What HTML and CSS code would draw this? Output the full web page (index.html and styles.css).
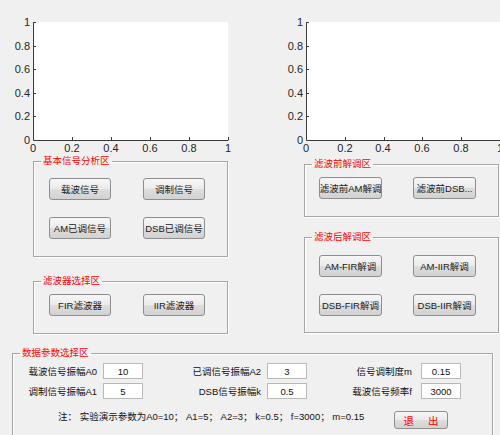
FILE: index.html
```html
<!DOCTYPE html>
<html>
<head>
<meta charset="utf-8">
<link rel="stylesheet" href="styles.css">
</head>
<body>
<div class="plots">
  <svg class="plot" width="250" height="154" viewBox="0 0 250 154">
    <rect x="33" y="22" width="195" height="118" fill="#fff"/>
    <path class="axis" d="M33.5 22V140.5H228.5"/>
    <path class="axis" d="M72.5 140v-3M111.5 140v-3M150.5 140v-3M189.5 140v-3M228.5 140v-3M33 22.5h3M33 46.5h3M33 69.5h3M33 93.5h3M33 116.5h3"/>
    <g class="ylab">
      <text x="30" y="26">1</text>
      <text x="30" y="50">0.8</text>
      <text x="30" y="73">0.6</text>
      <text x="30" y="97">0.4</text>
      <text x="30" y="120">0.2</text>
      <text x="30" y="144">0</text>
    </g>
    <g class="xlab">
      <text x="33" y="152">0</text>
      <text x="72" y="152">0.2</text>
      <text x="111" y="152">0.4</text>
      <text x="150" y="152">0.6</text>
      <text x="189" y="152">0.8</text>
      <text x="228" y="152">1</text>
    </g>
  </svg>
  <svg class="plot" width="250" height="154" viewBox="0 0 250 154">
    <rect x="56" y="22" width="194" height="118" fill="#fff"/>
    <path class="axis" d="M56.5 22V140.5H250"/>
    <path class="axis" d="M95.5 140v-3M134.5 140v-3M172.5 140v-3M211.5 140v-3M56 22.5h3M56 46.5h3M56 69.5h3M56 93.5h3M56 116.5h3"/>
    <g class="ylab">
      <text x="53" y="26">1</text>
      <text x="53" y="50">0.8</text>
      <text x="53" y="73">0.6</text>
      <text x="53" y="97">0.4</text>
      <text x="53" y="120">0.2</text>
      <text x="53" y="144">0</text>
    </g>
    <g class="xlab">
      <text x="56" y="152">0</text>
      <text x="95" y="152">0.2</text>
      <text x="133" y="152">0.4</text>
      <text x="172" y="152">0.6</text>
      <text x="211" y="152">0.8</text>
      <text x="250" y="152">1</text>
    </g>
  </svg>
</div>

<div class="middle">
  <div class="col col-left">
    <fieldset class="grp g-basic">
      <legend>基本信号分析区</legend>
      <div class="btn-grid">
        <button class="btn">载波信号</button>
        <button class="btn">调制信号</button>
        <button class="btn">AM已调信号</button>
        <button class="btn">DSB已调信号</button>
      </div>
    </fieldset>
    <fieldset class="grp g-filter">
      <legend>滤波器选择区</legend>
      <div class="btn-grid">
        <button class="btn">FIR滤波器</button>
        <button class="btn">IIR滤波器</button>
      </div>
    </fieldset>
  </div>
  <div class="col col-right">
    <fieldset class="grp g-pre">
      <legend>滤波前解调区</legend>
      <div class="btn-grid wide">
        <button class="btn">滤波前AM解调</button>
        <button class="btn">滤波前DSB...</button>
      </div>
    </fieldset>
    <fieldset class="grp g-post">
      <legend>滤波后解调区</legend>
      <div class="btn-grid wide">
        <button class="btn">AM-FIR解调</button>
        <button class="btn">AM-IIR解调</button>
        <button class="btn">DSB-FIR解调</button>
        <button class="btn">DSB-IIR解调</button>
      </div>
    </fieldset>
  </div>
</div>

<fieldset class="grp params">
  <legend>数据参数选择区</legend>
  <div class="prow">
    <span class="lab l1">载波信号振幅A0</span>
    <input class="inp i1" type="text" value="10">
    <span class="lab l2">已调信号振幅A2</span>
    <input class="inp i2" type="text" value="3">
    <span class="lab l3">信号调制度m</span>
    <input class="inp i3" type="text" value="0.15">
  </div>
  <div class="prow second">
    <span class="lab l1">调制信号振幅A1</span>
    <input class="inp i1" type="text" value="5">
    <span class="lab l2">DSB信号振幅k</span>
    <input class="inp i2" type="text" value="0.5">
    <span class="lab l3">载波信号频率f</span>
    <input class="inp i3" type="text" value="3000">
  </div>
  <div class="note-row">
    <span class="note">注：&nbsp;实验演示参数为A0=10；&nbsp;A1=5；&nbsp;A2=3；&nbsp;k=0.5；&nbsp;f=3000；&nbsp;m=0.15</span>
    <button class="btn exit"><span>退</span><span>出</span></button>
  </div>
</fieldset>
</body>
</html>
```

FILE: styles.css
```css
html, body {
  margin: 0;
  padding: 0;
}
body {
  width: 500px;
  height: 435px;
  overflow: hidden;
  background: #f0f0f0;
  font-family: "Liberation Sans", "Noto Sans CJK SC", sans-serif;
  font-size: 9.5px;
  color: #111;
}

.plots {
  display: flex;
  height: 154px;
}
.plot {
  display: block;
  flex: none;
}
.axis {
  stroke: #3a3a3a;
  stroke-width: 1;
  fill: none;
}
.ylab text, .xlab text {
  font-family: "Liberation Sans", sans-serif;
  font-size: 11px;
  fill: #262626;
}
.ylab text { text-anchor: end; }
.xlab text { text-anchor: middle; }

.middle {
  display: flex;
  align-items: flex-start;
}
.col {
  width: 195px;
  display: flex;
  flex-direction: column;
  flex: none;
}
.col-left { margin-left: 33px; }
.col-right { margin-left: 76px; padding-top: 3px; }

.grp {
  margin: 0;
  padding: 0;
  min-width: 0;
  border: 1px solid #a5a5a5;
  box-shadow: inset 1px 1px 0 #fff, 1px 1px 0 #fff;
  box-sizing: border-box;
}
.grp legend {
  color: #ff0000;
  line-height: 14px;
  padding: 0 2px;
  margin-left: 7px;
  font-size: 9.5px;
}

.btn-grid {
  display: grid;
  grid-template-columns: 62px 62px;
  column-gap: 32px;
  row-gap: 17px;
  padding-left: 15px;
}
.btn-grid.wide {
  grid-template-columns: 63px 63px;
  column-gap: 31px;
  padding-left: 14px;
}

.g-basic { padding-top: 10px; padding-bottom: 17px; }
.g-filter { margin-top: 17px; padding-top: 6px; padding-bottom: 17px; }
.g-pre { padding-top: 6px; padding-bottom: 17px; }
.g-post { margin-top: 13px; padding-top: 11px; padding-bottom: 16px; }

.btn {
  height: 22px;
  box-sizing: border-box;
  margin: 0;
  padding: 0;
  border: 1px solid #8e8e8e;
  border-radius: 3px;
  background: linear-gradient(#f6f6f6, #ebebeb 48%, #dddddd 52%, #d2d2d2);
  font-family: inherit;
  font-size: 9.5px;
  color: #1a1a1a;
  display: flex;
  align-items: center;
  justify-content: center;
  white-space: nowrap;
  overflow: hidden;
}

.params {
  margin: 12px 0 0 12px;
  width: 481px;
  padding: 3px 0 12px 0;
}
.prow {
  display: flex;
  align-items: center;
  height: 16px;
}
.prow.second { margin-top: 4px; }
.lab {
  text-align: right;
  white-space: nowrap;
  flex: none;
}
.l1 { width: 84px; margin-right: 6px; }
.l2 { width: 118px; margin-right: 6px; }
.l3 { width: 105px; margin-right: 9px; }
.inp {
  width: 40px;
  height: 16px;
  box-sizing: border-box;
  margin: 0;
  padding: 0;
  border: 1px solid #b9b9b9;
  background: #fff;
  text-align: center;
  font-family: inherit;
  font-size: 9.5px;
  color: #111;
  flex: none;
}

.note-row {
  display: flex;
  align-items: flex-start;
  margin-top: 12px;
}
.note {
  margin-left: 45px;
  width: 336px;
  line-height: 12px;
  white-space: nowrap;
  flex: none;
}
.btn.exit {
  width: 54px;
  height: 18px;
  color: #ff0000;
  font-size: 10.5px;
  gap: 14px;
}
```
